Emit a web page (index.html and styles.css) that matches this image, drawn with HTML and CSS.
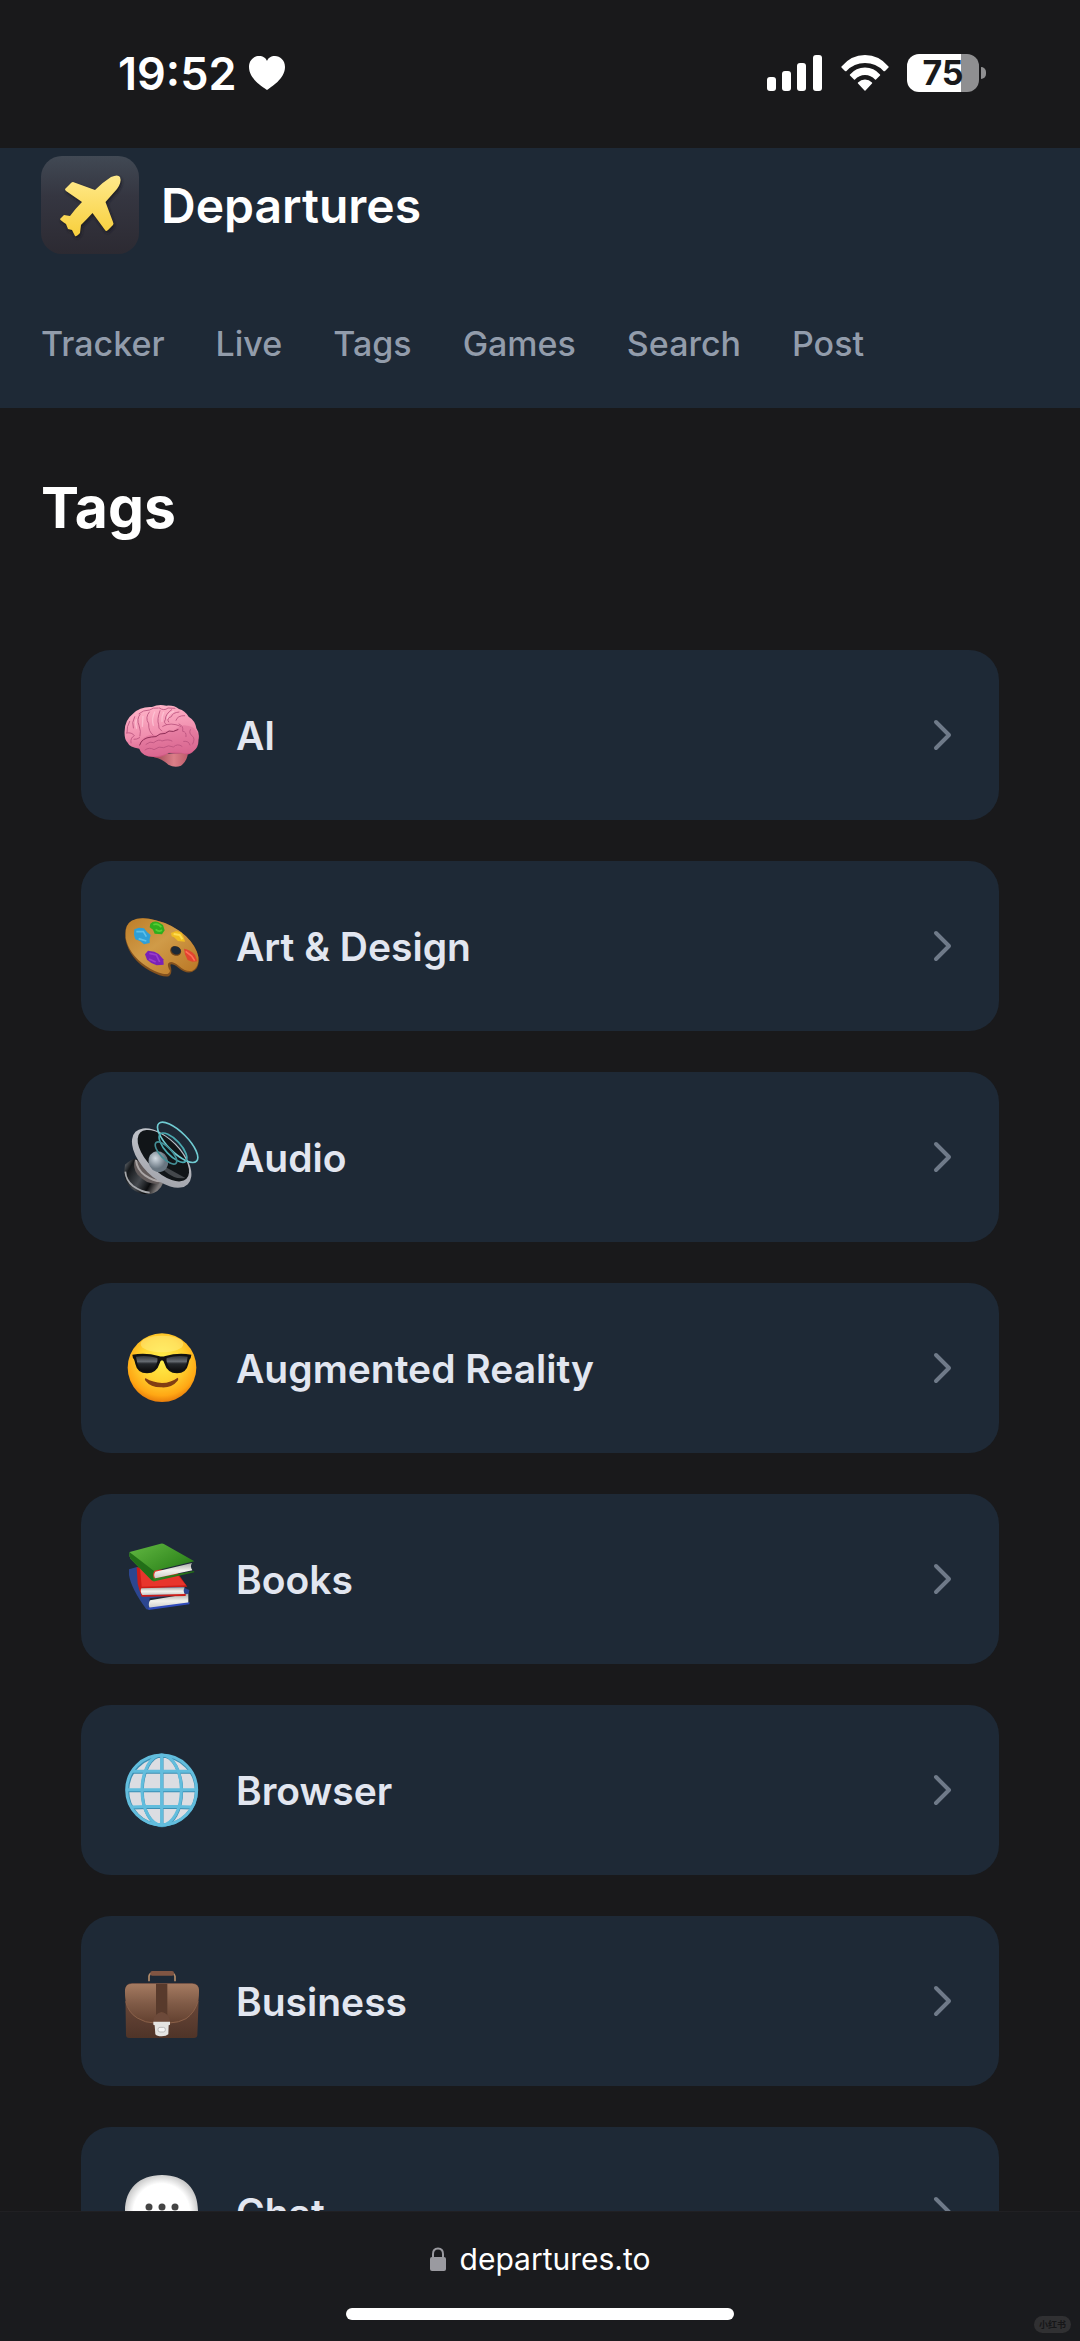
FILE: index.html
```html
<!DOCTYPE html>
<html lang="en">
  <head>
    <meta charset="UTF-8" />
    <meta name="viewport" content="width=device-width, initial-scale=1.0" />
    <title>Tags - Departures</title>
    <link rel="stylesheet" href="styles.css">
  </head>
  <body>
    <div class="status-bar">
      <div class="clock">
        <span>19:52</span>
        <svg width="36" height="34" viewBox="0 0 36 34"><path fill="#fff" d="M18 34C14 31 0 23 0 11C0 4 5 0 10 0C14 0 17 2 18 5C19 2 22 0 26 0C31 0 36 4 36 11C36 23 22 31 18 34Z"/></svg>
      </div>
      <div class="indicators">
        <svg width="56" height="36" viewBox="0 0 56 36" fill="#fff">
          <rect x="0" y="22" width="9" height="14" rx="3"/>
          <rect x="15" y="16" width="9" height="20" rx="3"/>
          <rect x="30" y="8" width="9" height="28" rx="3"/>
          <rect x="46" y="0" width="9" height="36" rx="3"/>
        </svg>
        <svg width="48" height="36" viewBox="0 0 48 36" fill="#fff">
          <path d="M0.500 11.500Q10 0 24 0T47.500 11.500Q48 12 47.500 12.500L44 16Q43 16.500 42.500 16Q35 8 24 8T5.500 16Q5 16.500 4 16L0.500 12.500Q0 12 0.500 11.500Z"/>
          <path d="M9 19.500Q15 12.500 24 12.500T39 19.500Q39.500 20 39 20.500L35 24.500Q34.500 25 34 24.500Q30 20 24 20T14 24.500Q13.500 25 13 24.500L9 20.500Q8.500 20 9 19.500Z"/>
          <path d="M17 27.500Q20 24.500 24 24.500T31 27.500Q31.500 28 31 28.500L24.500 35.500Q24 36 23.500 35.500L17 28.500Q16.500 28 17 27.500Z"/>
        </svg>
        <div class="battery">75</div>
      </div>
    </div>

    <header class="header">
      <a class="brand" href="#">
        <svg class="app-icon" viewBox="0 0 98 98">
          <defs>
            <linearGradient id="tile" x1="0" y1="0" x2="0" y2="1">
              <stop offset="0" stop-color="#414954"/><stop offset=".4" stop-color="#353641"/><stop offset="1" stop-color="#2c2a32"/>
            </linearGradient>
            <linearGradient id="gold" x1="0" y1="0" x2="0" y2="1">
              <stop offset="0" stop-color="#ffea8c"/><stop offset="1" stop-color="#f8cf3c"/>
            </linearGradient>
            <filter id="soft" x="-20%" y="-20%" width="150%" height="150%"><feGaussianBlur stdDeviation="1.500"/></filter>
          </defs>
          <rect width="98" height="98" rx="21" fill="url(#tile)"/>
          <path fill="#1b1b22" filter="url(#soft)" transform="translate(1 2)" d="M54 34L32 26Q31 26 30 27L24 33Q24 34 25 35L41 46Q35 52 29 60L23 59L19 63Q19 64 25 68L27 73L31 74L34 80Q35 81 39 77L40 69Q46 63 51.500 57L64 74Q65 76 67 74L72 69Q73 68 72 66L64.500 46L76 33Q81 26 79 21Q77 18 70 21Q62 26 54 34Z"/>
          <path fill="url(#gold)" d="M54 34L32 26Q31 26 30 27L24 33Q24 34 25 35L41 46Q35 52 29 60L23 59L19 63Q19 64 25 68L27 73L31 74L34 80Q35 81 39 77L40 69Q46 63 51.500 57L64 74Q65 76 67 74L72 69Q73 68 72 66L64.500 46L76 33Q81 26 79 21Q77 18 70 21Q62 26 54 34Z"/>
        </svg>
        <span>Departures</span>
      </a>
      <nav class="nav">
        <a href="#">Tracker</a>
        <a href="#">Live</a>
        <a href="#">Tags</a>
        <a href="#">Games</a>
        <a href="#">Search</a>
        <a href="#">Post</a>
      </nav>
    </header>

    <main class="content">
      <h1>Tags</h1>
      <ul class="tag-list">
        <li>
          <a class="tag" href="#">
            <svg class="emoji" viewBox="74 52 225 225">
              <defs>
                <linearGradient id="brain" x1=".4" y1="0" x2=".6" y2="1">
                  <stop offset="0" stop-color="#ffb4c8"/><stop offset=".55" stop-color="#f08eae"/><stop offset="1" stop-color="#cc527e"/>
                </linearGradient>
                <linearGradient id="stem" x1="0" y1="0" x2="1" y2="0"><stop offset="0" stop-color="#98404f"/><stop offset=".6" stop-color="#db7f88"/><stop offset="1" stop-color="#bd5b6a"/></linearGradient>
              </defs>
              <path fill="url(#stem)" d="M160 224L184 220L266 216Q264 240 245 255Q227 263 207 252Q190 236 164 230Z"/>
              <path fill="url(#brain)" d="M76 150Q77 117 101 99Q122 77 158 79Q178 69 201 75Q224 73 239 85Q257 90 268 108Q288 120 291 143Q302 158 297 178Q299 198 283 211Q270 227 247 218Q228 221 209 217Q189 232 162 229Q130 229 120 204Q91 201 84 185Q74 174 76 150Z"/>
              <path fill="#e0719a" d="M126 178Q146 158 176 164Q193 147 221 152Q236 139 252 134Q281 135 291 151Q301 166 296 183Q292 205 281 211Q268 223 247 216L210 215Q187 228 159 227Q119 224 120 198Z" opacity=".6"/>
              <g fill="none" stroke="#b9527d" stroke-width="2.500" stroke-linecap="round">
                <path d="M91 122Q82 137 83 155M106 108Q96 126 102 142M122 101Q111 116 119 134Q126 153 122 166M150 94Q136 111 148 129Q147 153 161 163M182 90Q172 117 178 132Q175 143 187 151M217 87Q198 100 198 117Q191 126 202 132M239 94Q219 96 216 108Q200 113 208 124M256 105Q234 104 230 119M119 99Q131 88 151 88Q160 80 177 82M180 82Q194 92 206 82L227 83M190 137Q214 123 244 137M81 157Q98 154 105 165Q92 172 95 187M104 176Q112 177 121 171M239 130Q253 135 250 152Q262 153 260 168M253 182Q269 180 272 193M137 208Q150 198 164 207Q180 195 193 201Q208 191 222 199Q235 187 248 197M140 191Q153 180 163 186Q179 174 188 181Q207 174 218 181M273 147Q267 158 280 167Q288 175 280 190"/>
              </g>
              <path fill="none" stroke="#8f2f57" stroke-width="3" stroke-linecap="round" d="M121 193Q127 172 156 169Q171 171 182 160Q200 161 209 151Q221 156 236 147"/>
              <path fill="none" stroke="#ffd1de" stroke-width="4" opacity=".6" stroke-linecap="round" d="M111 117Q107 128 112 143M131 107L129 137M166 94Q156 114 162 134M193 95Q186 110 188 122M223 92Q205 100 204 113"/>
            </svg>
            <span class="tag-name">AI</span>
            <svg class="chevron" viewBox="0 0 20 32"><path d="M4 3L17 16L4 29"/></svg>
          </a>
        </li>
        <li>
          <a class="tag" href="#">
            <svg class="emoji" viewBox="74 55 225 225">
              <defs><linearGradient id="wood" x1="0" y1="0" x2="1" y2="1"><stop offset="0" stop-color="#bd7d28"/><stop offset=".45" stop-color="#d09b48"/><stop offset="1" stop-color="#b97624"/></linearGradient></defs>
              <path fill="#83511e" d="M78 135Q75 104 96 91Q125 76 169 89Q221 101 260 137Q292 167 298 202Q302 233 278 244Q259 250 237 231Q219 218 213 222Q221 249 208 257Q190 261 151 240Q91 207 78 145Z"/>
              <path fill="url(#wood)" d="M79 132Q77 102 97 90Q125 76 169 89Q221 101 260 137Q290 166 297 199Q299 230 279 240Q258 244 238 225Q214 206 206 219Q204 227 212 240Q210 254 190 249Q165 243 139 225Q88 190 79 141Z"/>
              <ellipse cx="229" cy="181" rx="17" ry="14" transform="rotate(24 229 181)" fill="#704318"/>
              <ellipse cx="230" cy="179" rx="15" ry="12" transform="rotate(24 230 179)" fill="#1e2936"/>
              <path fill="#2f9fd6" d="M105 116L119 111L134 113L143 124L154 133L151 145L151 157L134 161L122 151L108 146L104 132Z"/>
              <path fill="none" stroke="#5cc0ea" stroke-width="5" d="M111 123L132 123L141 138M118 144L141 151"/>
              <path fill="#2fae1d" d="M153 99Q162 90 176 94L191 103L196 119L188 131L166 129L161 117L151 110Z"/>
              <path fill="none" stroke="#56cf34" stroke-width="5" d="M162 102Q177 97 186 110M169 116Q178 125 188 118"/>
              <path fill="#f0bd22" d="M215 127L231 121L247 126L254 142L257 153L236 151L224 140L217 137Z"/><path fill="none" stroke="#ffdc52" stroke-width="6" d="M223 130L241 133L249 146"/>
              <path fill="#7a22b6" d="M137 191L146 180L165 183L178 190L192 206L193 222L172 224L156 217L143 207Z"/><path fill="none" stroke="#9a3dca" stroke-width="5" d="M150 188L171 193L181 214M149 205L169 214"/>
              <path fill="#e2442f" d="M254 174Q272 176 287 193L294 212L279 213L265 208L257 191Z"/><path fill="none" stroke="#ff7058" stroke-width="5" d="M259 182L277 196L286 210"/>
            </svg>
            <span class="tag-name">Art &amp; Design</span>
            <svg class="chevron" viewBox="0 0 20 32"><path d="M4 3L17 16L4 29"/></svg>
          </a>
        </li>
        <li>
          <a class="tag" href="#">
            <svg class="emoji" viewBox="74 58 225 225">
              <defs>
                <linearGradient id="magnet" x1="0" y1="0" x2="1" y2=".5"><stop offset="0" stop-color="#797f86"/><stop offset=".22" stop-color="#15181b"/><stop offset=".55" stop-color="#464a4f"/><stop offset=".8" stop-color="#0b0c0e"/><stop offset="1" stop-color="#7c7878"/></linearGradient>
                <linearGradient id="metal" x1="0" y1="0" x2="1" y2="1"><stop offset="0" stop-color="#c6cad0"/><stop offset=".5" stop-color="#b4b6bd"/><stop offset="1" stop-color="#9c9ea5"/></linearGradient>
                <radialGradient id="dome" cx=".45" cy=".3"><stop offset="0" stop-color="#d3dce4"/><stop offset="1" stop-color="#697681"/></radialGradient>
              </defs>
              <path fill="url(#magnet)" d="M77 192Q95 174 111 174L194 233Q191 265 163 277Q132 289 97 264Q72 240 75 213Z"/>
              <path fill="none" stroke="#a7a9ad" stroke-width="5" d="M78 213Q80 240 101 256Q126 274 151 276"/>
              <path fill="#625b5b" d="M107 174L186 235L176 250Q139 251 114 221Q99 200 107 174Z"/>
              <path fill="none" stroke="#aaa5a5" stroke-width="6" d="M110 178Q113 207 137 224Q162 241 185 242"/>
              <ellipse cx="187" cy="172" rx="111" ry="60" transform="rotate(45 187 172)" fill="url(#metal)"/>
              <ellipse cx="192" cy="165" rx="98" ry="48" transform="rotate(45 192 165)" fill="#111518"/>
              <path fill="#44484c" d="M182 190L258 232Q227 238 196 211Z"/>
              <ellipse cx="177" cy="183" rx="29" ry="32" transform="rotate(-28 177 183)" fill="url(#dome)"/>
              <g fill="none" stroke="#70cbd2" stroke-width="5">
                <ellipse cx="235" cy="125" rx="80" ry="30" transform="rotate(45 235 125)"/>
                <ellipse cx="221" cy="141" rx="56" ry="23" transform="rotate(47 221 141)" stroke="#4aaab1"/>
                <ellipse cx="200" cy="157" rx="43" ry="17" transform="rotate(46 200 157)" stroke="#438d94"/>
              </g>
            </svg>
            <span class="tag-name">Audio</span>
            <svg class="chevron" viewBox="0 0 20 32"><path d="M4 3L17 16L4 29"/></svg>
          </a>
        </li>
        <li>
          <a class="tag" href="#">
            <svg class="emoji" viewBox="74 61 225 225">
              <defs>
                <radialGradient id="face" cx=".5" cy=".38" r=".62"><stop offset="0" stop-color="#fff04d"/><stop offset=".5" stop-color="#ffd331"/><stop offset=".85" stop-color="#ffa714"/><stop offset="1" stop-color="#e87d0b"/></radialGradient>
                <linearGradient id="lens" x1="0" y1="0" x2="0" y2="1"><stop offset="0" stop-color="#30343a"/><stop offset=".35" stop-color="#666b71"/><stop offset=".5" stop-color="#25282c"/><stop offset="1" stop-color="#0b0b0c"/></linearGradient>
              </defs>
              <circle cx="188" cy="171" r="103" fill="url(#face)"/>
              <ellipse cx="188" cy="100" rx="64" ry="25" fill="#fff59b" opacity=".4"/>
              <path fill="#111" d="M99 132Q140 125 178 136Q188 139 198 136Q236 125 276 132L274 143Q270 145 267 160Q261 188 233 188Q204 188 195 158Q193 149 188 149Q183 149 181 158Q172 188 143 188Q114 188 108 160Q105 145 101 143Z"/>
              <path fill="url(#lens)" d="M110 138Q142 132 174 142Q177 153 166 170Q157 183 143 183Q120 183 114 158ZM265 138Q234 132 202 142Q199 153 210 170Q218 183 232 183Q255 183 262 158Z"/>
              <path fill="#823e13" d="M139 203Q161 216 188 217Q215 216 235 201Q239 204 235 210Q217 232 187 230Q155 231 139 211Q134 204 139 203Z"/>
            </svg>
            <span class="tag-name">Augmented Reality</span>
            <svg class="chevron" viewBox="0 0 20 32"><path d="M4 3L17 16L4 29"/></svg>
          </a>
        </li>
        <li>
          <a class="tag" href="#">
            <svg class="emoji" viewBox="74 64 225 225">
              <defs>
                <linearGradient id="green" x1="0" y1="0" x2="1" y2="1"><stop offset="0" stop-color="#63b943"/><stop offset=".6" stop-color="#378d22"/><stop offset="1" stop-color="#175c10"/></linearGradient>
                <linearGradient id="pages" x1="0" y1="0" x2="0" y2="1"><stop offset="0" stop-color="#a9aaa7"/><stop offset=".5" stop-color="#f3f3ed"/><stop offset="1" stop-color="#cacbc8"/></linearGradient>
              </defs>
              <path fill="#2c4690" d="M89 146L113 139L270 208L268 219L151 233L148 267L141 266Q95 203 89 163Z"/>
              <path fill="url(#pages)" d="M152 239L267 219V249L151 263Q145 251 152 239Z"/>
              <path fill="#304cbc" d="M146 261L271 245L270 251L148 268Z"/>
              <path fill="#cc1d18" d="M112 140L231 152L264 198L132 204V222L259 219V226L127 228Q119 206 115 189Z"/>
              <path fill="#e8352c" d="M122 142L225 151L260 194L127 198Z"/>
              <path fill="url(#pages)" d="M126 203L256 200Q250 210 256 220L129 223Q121 212 126 203Z"/>
              <path fill="url(#green)" d="M91 94L184 69Q190 67 195 71L285 122L166 150Q158 158 164 173L284 151L285 155L169 181Q162 184 157 179L94 115Q88 105 91 94Z"/>
              <path fill="#226f18" d="M91 95L164 151Q158 162 163 178L157 179L94 115Q88 107 91 95Z"/>
              <path fill="url(#pages)" d="M168 153L278 127Q271 137 279 149L168 173Q161 163 168 153Z"/>
            </svg>
            <span class="tag-name">Books</span>
            <svg class="chevron" viewBox="0 0 20 32"><path d="M4 3L17 16L4 29"/></svg>
          </a>
        </li>
        <li>
          <a class="tag" href="#">
            <svg class="emoji" viewBox="74 67 225 225">
              <circle cx="187" cy="178" r="106" fill="#dcdde2"/>
              <g fill="none" stroke="#3c8fb3" stroke-width="9" transform="translate(1 3)">
                <circle cx="187" cy="177" r="103"/><ellipse cx="187" cy="177" rx="59" ry="105"/><path d="M187 72V282M81 177H293M98 122Q187 120 276 122M98 229Q187 225 276 229"/>
              </g>
              <g fill="none" stroke="#62bddd" stroke-width="9">
                <circle cx="187" cy="178" r="105"/><ellipse cx="187" cy="178" rx="59" ry="105"/><path d="M187 72V282M81 177H293M98 122Q187 120 276 122M98 229Q187 225 276 229"/>
              </g>
            </svg>
            <span class="tag-name">Browser</span>
            <svg class="chevron" viewBox="0 0 20 32"><path d="M4 3L17 16L4 29"/></svg>
          </a>
        </li>
        <li>
          <a class="tag" href="#">
            <svg class="emoji" viewBox="74 70 225 225">
              <defs>
                <linearGradient id="leather" x1="0" y1="0" x2="0" y2="1"><stop offset="0" stop-color="#a57b61"/><stop offset=".5" stop-color="#805b47"/><stop offset="1" stop-color="#62402f"/></linearGradient>
                <linearGradient id="case" x1="0" y1="0" x2="0" y2="1"><stop offset="0" stop-color="#765041"/><stop offset="1" stop-color="#4f3428"/></linearGradient>
              </defs>
              <path fill="none" stroke="#b28c6b" stroke-width="5" d="M149 122V107Q150 98 158 97H219Q226 99 227 107V122"/>
              <rect x="153" y="91" width="71" height="14" rx="6" fill="#805543"/>
              <path fill="url(#case)" d="M78 149Q78 128 97 128H279Q299 129 299 149L294 284Q293 292 284 292H90Q80 292 80 283Z"/>
              <path fill="url(#leather)" d="M77 147Q79 129 99 129H278Q297 129 299 147Q300 208 260 235Q237 248 210 248H164Q135 247 112 232Q75 206 77 147Z"/>
              <path fill="none" stroke="#8a6049" stroke-width="3" d="M79 182Q86 215 114 232Q138 247 166 247H210Q239 246 260 234Q287 215 296 182"/>
              <path fill="#583a2c" d="M170 129H204V229Q198 215 187 215Q176 215 170 229Z"/>
              <path fill="#6d4a3a" d="M162 243Q164 216 187 216Q210 216 212 243Z"/>
              <path fill="#e4e4e2" d="M162 243H212V252L208 254L207 281Q201 287 187 287Q173 287 168 281L166 254L162 252Z"/>
              <rect x="176" y="260" width="22" height="14" rx="6" fill="#f5f5f5" stroke="#bbb" stroke-width="3"/>
            </svg>
            <span class="tag-name">Business</span>
            <svg class="chevron" viewBox="0 0 20 32"><path d="M4 3L17 16L4 29"/></svg>
          </a>
        </li>
        <li>
          <a class="tag" href="#">
            <svg class="emoji" viewBox="0 0 75 75">
              <defs><radialGradient id="bubble" cx=".5" cy=".5" r=".55"><stop offset=".7" stop-color="#fff"/><stop offset="1" stop-color="#b9b9b9"/></radialGradient></defs>
              <path fill="url(#bubble)" d="M38 0C61 0 74 14 74 36C74 58 60 68 38 68L17 75L20 65C7 60 1 50 1 36C1 14 15 0 38 0Z"/>
              <g fill="#444"><circle cx="25" cy="32" r="3.500"/><circle cx="38" cy="32" r="3.500"/><circle cx="51" cy="32" r="3.500"/></g>
            </svg>
            <span class="tag-name">Chat</span>
            <svg class="chevron" viewBox="0 0 20 32"><path d="M4 3L17 16L4 29"/></svg>
          </a>
        </li>
      </ul>
    </main>

    <footer class="browser-bar">
      <div class="address">
        <svg width="16" height="24" viewBox="0 0 16 24"><path d="M3 11V7Q3 1.500 8 1.500T13 7V11" fill="none" stroke="#9a9aa0" stroke-width="2"/><rect y="10" width="16" height="14" rx="2" fill="#9a9aa0"/></svg>
        <span>departures.to</span>
      </div>
      <div class="home-indicator"></div>
      <span class="watermark">小红书</span>
    </footer>
  </body>
</html>
```

FILE: styles.css
```css
*{
  box-sizing: border-box;
}
body{
  display: flex;
  flex-direction: column;
  height: 100vh;
  margin: 0;
  overflow: hidden;
  background-color: #19191b;
  color: white;
  font-family: Inter, "Noto Sans CJK SC", sans-serif;
}
a{
  color: inherit;
  text-decoration: none;
}
svg{
  display: block;
  flex-shrink: 0;
}

/* status bar */
.status-bar{
  display: flex;
  flex-shrink: 0;
  justify-content: space-between;
  height: 148px;
  padding: 46px 94px 0 118px;
}
.clock{
  display: flex;
  align-items: center;
  gap: 12px;
  height: 54px;
  font-size: 45px;
  font-weight: 600;
}
.indicators{
  display: flex;
  align-items: center;
  gap: 18px;
  height: 54px;
}
.battery{
  position: relative;
  width: 72px;
  height: 38px;
  margin-right: 7px;
  border-radius: 12px;
  background: linear-gradient(to right, #fff 75%, #8f8f91 75%);
  color: #19191b;
  font-size: 34px;
  font-weight: 700;
  line-height: 38px;
  text-align: center;
}
.battery::after{
  content: "";
  position: absolute;
  top: 13px;
  right: -7px;
  width: 5px;
  height: 12px;
  border-radius: 0 5px 5px 0;
  background-color: #8f8f91;
}

/* header */
.header{
  flex-shrink: 0;
  padding: 8px 41px 40px;
  background-color: #1e2936;
}
.brand{
  display: flex;
  align-items: center;
  gap: 22px;
  font-size: 48px;
  font-weight: 600;
}
.app-icon{
  width: 98px;
  height: 98px;
}
.nav{
  display: flex;
  gap: 51px;
  margin-top: 66px;
  color: #929cab;
  font-size: 34px;
  font-weight: 500;
  line-height: 48px;
}

/* tags */
.content{
  flex: 1;
  min-height: 0;
  padding: 60px 41px 0;
  overflow: hidden;
}
h1{
  margin: 0;
  font-size: 57px;
  font-weight: 700;
  line-height: 80px;
}
.tag-list{
  display: flex;
  flex-direction: column;
  gap: 41px;
  margin: 102px 40px 0;
  padding: 0;
  list-style: none;
}
.tag{
  display: flex;
  align-items: center;
  height: 170px;
  padding: 0 47px 0 43px;
  border-radius: 30px;
  background-color: #1e2936;
}
.emoji{
  width: 75px;
  height: 75px;
}
.tag-name{
  flex: 1;
  margin-left: 37px;
  color: #e2e6f0;
  font-size: 39px;
  font-weight: 600;
}
.chevron{
  width: 20px;
  height: 32px;
  fill: none;
  stroke: #6f7a89;
  stroke-width: 4;
  stroke-linecap: round;
  stroke-linejoin: round;
}

/* browser bar */
.browser-bar{
  position: relative;
  display: flex;
  flex-direction: column;
  flex-shrink: 0;
  align-items: center;
  height: 130px;
  padding-top: 27px;
  border-top: 1px solid #202023;
  background-color: #1a1b1e;
}
.address{
  display: flex;
  align-items: center;
  gap: 14px;
  font-size: 30px;
  line-height: 40px;
}
.home-indicator{
  width: 36%;
  height: 12px;
  margin-top: 29px;
  border-radius: 6px;
  background-color: white;
}
.watermark{
  position: absolute;
  right: 9px;
  bottom: 8px;
  padding: 0 5px;
  border-radius: 9px;
  background-color: #303032;
  color: #161618;
  font-size: 9px;
  font-weight: 700;
  line-height: 17px;
}
```
